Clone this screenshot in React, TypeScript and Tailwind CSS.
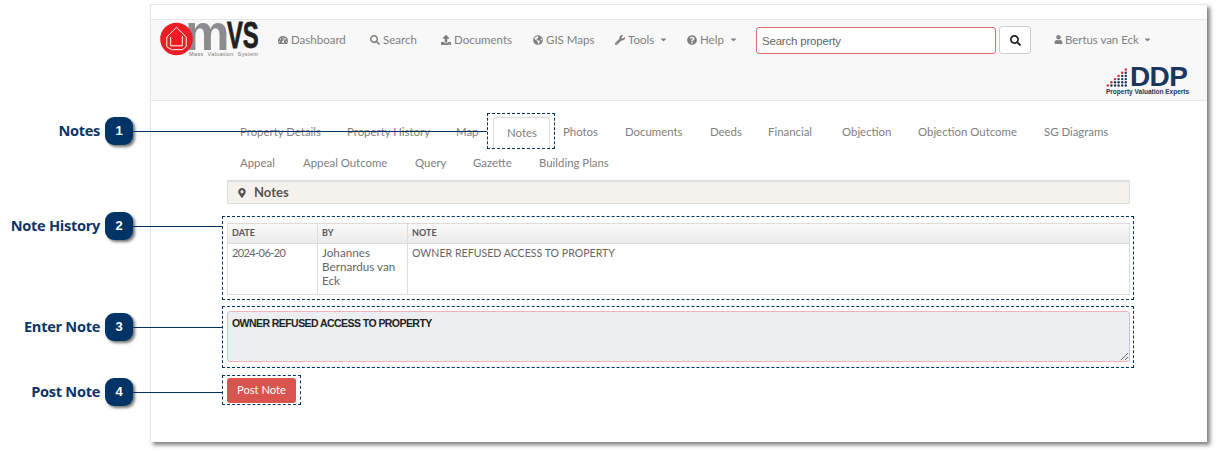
import { FaCaretDown, FaGlobeAmericas, FaMapMarkerAlt, FaQuestionCircle, FaSearch, FaTachometerAlt, FaUpload, FaUser, FaWrench } from "react-icons/fa";

const ui = "font-['Lato',sans-serif]";

const navLinks = [
  { label: "Dashboard", icon: <FaTachometerAlt />, w: "w-[92px]" },
  { label: "Search", icon: <FaSearch />, w: "w-[71px]" },
  { label: "Documents", icon: <FaUpload />, w: "w-[92px]" },
  { label: "GIS Maps", icon: <FaGlobeAmericas />, w: "w-[82px]" },
  { label: "Tools", icon: <FaWrench />, w: "w-[72px]", caret: true },
  { label: "Help", icon: <FaQuestionCircle />, w: "w-[69px]", caret: true },
];

const tabRows = [
  [
    { label: "Property Details", w: "w-[107px]" },
    { label: "Property History", w: "w-[109px]" },
    { label: "Map", w: "w-[48px] mr-[2px]" },
    { label: "Notes", w: "w-[57px]", active: true },
    { label: "Photos", w: "w-[62px]" },
    { label: "Documents", w: "w-[85px]" },
    { label: "Deeds", w: "w-[58px]" },
    { label: "Financial", w: "w-[74px]" },
    { label: "Objection", w: "w-[76px]" },
    { label: "Objection Outcome", w: "w-[126px]" },
    { label: "SG Diagrams", w: "w-[90px]" },
  ],
  [
    { label: "Appeal", w: "w-[63px]" },
    { label: "Appeal Outcome", w: "w-[112px]" },
    { label: "Query", w: "w-[58px]" },
    { label: "Gazette", w: "w-[66px]" },
    { label: "Building Plans", w: "w-[84px]" },
  ],
];

const callouts = [
  { n: 1, label: "Notes", top: "top-[117px]", line: "w-[354px]" },
  { n: 2, label: "Note History", top: "top-[212px]", line: "w-[89px]" },
  { n: 3, label: "Enter Note", top: "top-[313px]", line: "w-[89px]" },
  { n: 4, label: "Post Note", top: "top-[378px]", line: "w-[89px]" },
];

function Logo() {
  return (
    <div className="relative w-[100px] h-[36px] ml-[9px] shrink-0">
      <span className="absolute left-[25px] top-[-9px] text-[50px] leading-[30px] font-bold text-[#8c8c8e] font-['Liberation_Sans',sans-serif]">m</span>
      <span className="absolute left-[67px] top-[-4px] text-[36px] leading-[26px] font-bold text-[#231f20] [-webkit-text-stroke:0.8px_#231f20] font-['Liberation_Sans',sans-serif] scale-x-[0.66] origin-left">VS</span>
      <svg viewBox="0 0 34 34" className="absolute left-0 top-[-5px] w-[33px] h-[34px]">
        <circle cx="17" cy="17" r="16.8" fill="#ee1c25" />
        <path d="M7 15 L17 5 L27 15 V25 L23 28 H12 L7 25 Z M11 15 V24 H23 V14" fill="none" stroke="#fff" strokeWidth="1" />
      </svg>
      <span className="absolute left-[29px] top-[24px] text-[5.5px] leading-[7px] tracking-[0.4px] whitespace-nowrap text-[#777] font-['Liberation_Sans',sans-serif]">Mass&nbsp; Valuation&nbsp; System</span>
    </div>
  );
}

function DdpLogo() {
  const columns = [1, 2, 3, 4, 5, 6];
  return (
    <div className="relative w-[82px] h-[30px]">
      <svg viewBox="0 0 25 20" className="absolute left-0 top-[-3px] w-[25px] h-[20px]">
        {columns.map((c) =>
          Array.from({ length: c }).map((_, i) => (
            <circle key={`${c}-${i}`} cx={c * 3.6 - 1.8} cy={18.5 - i * 3.2} r="1.2" fill={i === c - 1 ? "#e2202c" : "#1b365d"} />
          )),
        )}
      </svg>
      <span className="absolute left-[24px] top-[-3px] text-[28px] leading-[19px] font-bold tracking-[-0.6px] text-[#1b365d] font-['Liberation_Sans',sans-serif]">DDP</span>
      <span className="absolute left-0 top-[18px] text-[6.5px] leading-[8px] font-bold whitespace-nowrap text-[#1b365d] font-['Liberation_Sans',sans-serif]">Property Valuation Experts</span>
    </div>
  );
}

function DashedBox({ children, className }: { children: React.ReactNode; className: string }) {
  return <div className={`border border-dashed border-[#003366] ${className}`}>{children}</div>;
}

export default function App() {
  return (
    <div className={`relative w-[1216px] h-[451px] overflow-hidden bg-white ${ui}`}>
      <div className="ml-[150px] pt-[4px]">
        <div className="w-[1057px] h-[438px] bg-white border-t border-l border-[#e6e6e6] shadow-[3px_3px_4px_rgba(0,0,0,0.5)]">
          <div className="h-[14px]" />
          <nav className="h-[82px] bg-[#f8f8f8] border-y border-[#e7e7e7]">
            <div className="flex items-start pt-[7px] h-[50px]">
              <Logo />
              <div className="flex items-center h-[25px] ml-[18px] text-[11.5px] text-[#808080]">
                {navLinks.map((l) => (
                  <span key={l.label} className={`flex items-center gap-[3px] ${l.w}`}>
                    <span className="text-[10px]">{l.icon}</span>
                    {l.label}
                    {l.caret && <FaCaretDown className="text-[9px] ml-[2px]" />}
                  </span>
                ))}
              </div>
              <input
                readOnly
                placeholder="Search property"
                className="w-[240px] h-[27px] px-[5px] bg-white border border-[#e06a6a] rounded-[3px] text-[11.5px] tracking-[-0.2px] font-['Liberation_Sans',sans-serif] placeholder:text-[#666]"
              />
              <button className="ml-[3px] mt-[-1px] w-[32px] h-[28px] flex items-center justify-center bg-white border border-[#ccc] rounded-[3px] text-[#222] text-[11px]">
                <FaSearch />
              </button>
              <span className="flex items-center h-[25px] ml-[23px] gap-[2px] text-[11.4px] text-[#808080]">
                <FaUser className="text-[9px]" />
                Bertus van Eck
                <FaCaretDown className="text-[9px] ml-[2px]" />
              </span>
            </div>
            <div className="flex justify-end pr-[19px]">
              <DdpLogo />
            </div>
          </nav>
          <main className="pl-[76px] pt-[16px]">
            {tabRows.map((row, i) => (
              <div key={i} className={`flex items-center ${i === 0 ? "h-[31px]" : "h-[30px]"} text-[11.4px] text-[#808080]`}>
                {row.map((t) => (
                  <span
                    key={t.label}
                    className={`relative flex items-center h-full pl-[13px] pb-[1px] whitespace-nowrap ${t.w} ${t.active ? "bg-white border border-[#ddd] border-b-0 rounded-t-[3px]" : ""}`}
                  >
                    {t.label}
                    {t.active && <span className="absolute left-[-7px] right-[-6px] top-[-5px] bottom-[-1px] border border-dashed border-[#003366]" />}
                  </span>
                ))}
              </div>
            ))}
            <div className="mt-[2px] w-[903px] h-[24px] flex items-center gap-[7px] pl-[9px] bg-[#f5f1ec] border border-[#ddd] border-t-2 text-[13px] font-bold text-[#555]">
              <FaMapMarkerAlt className="text-[10px]" />
              Notes
            </div>
            <DashedBox className="mt-[12px] ml-[-5px] w-[912px] h-[84px] p-[6px_4px_0_4px]">
              <table className="w-[903px] table-fixed border-collapse border border-[#ddd] text-[11.7px] text-[#666]">
                <thead>
                  <tr className="h-[20px] bg-gradient-to-b from-[#fafafa] to-[#e9e9e9] text-[9px] text-left text-[#555]">
                    <th className="w-[90px] pl-[4px] pb-[2px] border border-[#ddd] font-bold">DATE</th>
                    <th className="w-[90px] pl-[4px] pb-[2px] border border-[#ddd] font-bold">BY</th>
                    <th className="pl-[4px] pb-[2px] border border-[#ddd] font-bold">NOTE</th>
                  </tr>
                </thead>
                <tbody>
                  <tr className="leading-[14px] align-top">
                    <td className="h-[51px] pl-[4px] pt-[2px] border border-[#ddd] text-[11px] tracking-[-0.6px]">2024-06-20</td>
                    <td className="pl-[4px] pt-[1px] border border-[#ddd]">Johannes Bernardus van Eck</td>
                    <td className="pl-[4px] pt-[2px] border border-[#ddd] text-[10.6px]">OWNER REFUSED ACCESS TO PROPERTY</td>
                  </tr>
                </tbody>
              </table>
            </DashedBox>
            <DashedBox className="mt-[6px] ml-[-5px] w-[912px] h-[62px] p-[4px]">
              <textarea
                readOnly
                value="OWNER REFUSED ACCESS TO PROPERTY"
                className="block w-[903px] h-[51px] px-[4px] py-[4px] bg-[#eceef1] border border-[#f0b4b4] rounded-[3px] text-[10.5px] tracking-[-0.56px] leading-[14px] font-bold text-[#222] font-['Liberation_Sans',sans-serif] outline-none"
              />
            </DashedBox>
            <DashedBox className="mt-[7px] ml-[-5px] w-[79px] h-[30px] p-[2px_4px]">
              <button className="block w-[69px] h-[25px] bg-[#d9534f] rounded-[3px] text-[11.2px] text-white">Post Note</button>
            </DashedBox>
          </main>
        </div>
      </div>
      {callouts.map((c) => (
        <div key={c.n} className={`absolute left-0 flex items-center ${c.top}`}>
          <span className="w-[100px] text-right text-[14.6px] font-bold text-[#0b3566] font-['Open_Sans',sans-serif] tracking-[-0.3px] whitespace-nowrap">{c.label}</span>
          <span className="ml-[5px] w-[28px] h-[28px] flex items-center justify-center rounded-[9px] bg-[#003366] text-[13px] font-bold text-white shadow-[2px_2px_3px_rgba(0,0,0,0.55)] font-['Liberation_Sans',sans-serif]">{c.n}</span>
          <span className={`h-[1px] bg-[#003366] ${c.line}`} />
        </div>
      ))}
    </div>
  );
}
